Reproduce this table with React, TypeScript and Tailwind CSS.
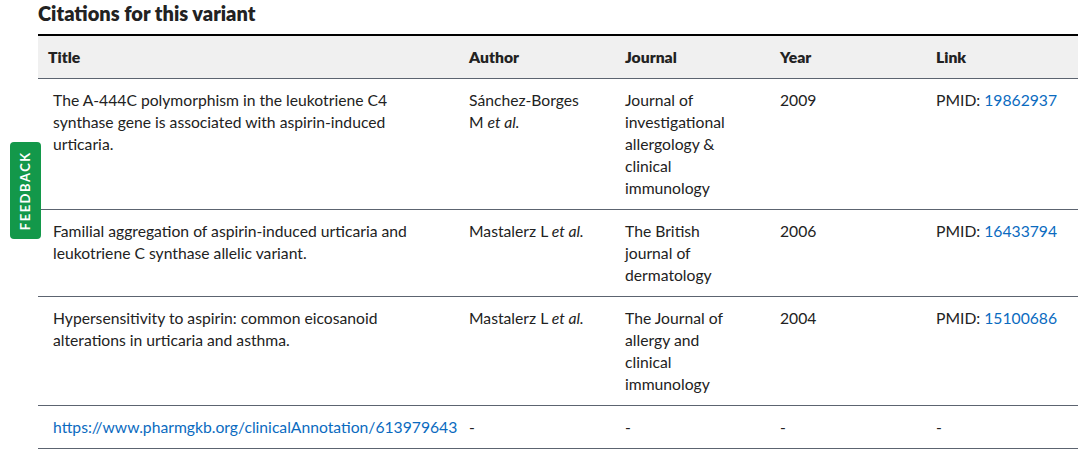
import React from "react";

type Citation = {
  title: React.ReactNode;
  author: string;
  journal: React.ReactNode;
  year: string;
  pmid: string;
};

const citations: Citation[] = [
  {
    title: (
      <>
        The A-444C polymorphism in the leukotriene C4
        <br />
        synthase gene is associated with aspirin-induced
        <br />
        urticaria.
      </>
    ),
    author: "Sánchez-Borges M",
    journal: (
      <>
        Journal of
        <br />
        investigational
        <br />
        allergology &amp;
        <br />
        clinical
        <br />
        immunology
      </>
    ),
    year: "2009",
    pmid: "19862937",
  },
  {
    title: (
      <>
        Familial aggregation of aspirin-induced urticaria and
        <br />
        leukotriene C synthase allelic variant.
      </>
    ),
    author: "Mastalerz L",
    journal: (
      <>
        The British
        <br />
        journal of
        <br />
        dermatology
      </>
    ),
    year: "2006",
    pmid: "16433794",
  },
  {
    title: (
      <>
        Hypersensitivity to aspirin: common eicosanoid
        <br />
        alterations in urticaria and asthma.
      </>
    ),
    author: "Mastalerz L",
    journal: (
      <>
        The Journal of
        <br />
        allergy and
        <br />
        clinical
        <br />
        immunology
      </>
    ),
    year: "2004",
    pmid: "15100686",
  },
];

function AuthorCell({ name }: { name: string }) {
  if (name.startsWith("Sánchez")) {
    return (
      <>
        Sánchez-Borges
        <br />M <i>et al.</i>
      </>
    );
  }
  return (
    <>
      {name} <i>et al.</i>
    </>
  );
}

export default function App() {
  return (
    <div
      className="relative h-[460px] w-[1091px] overflow-hidden bg-white pl-[38px] text-[#222]"
      style={{ fontFamily: "Lato, 'Liberation Sans', sans-serif" }}
    >
      <h2 className="pt-[1px] text-[20px] font-extrabold leading-[24px] text-[#222]">Citations for this variant</h2>

      <table className="mt-[9px] w-[1040px] table-fixed border-collapse text-[15.7px] leading-[22px]">
        <colgroup>
          <col className="w-[421px]" />
          <col className="w-[156px]" />
          <col className="w-[155px]" />
          <col className="w-[156px]" />
          <col className="w-[152px]" />
        </colgroup>
        <thead>
          <tr className="border-t-2 border-b border-t-black border-b-[#5c6470] bg-[#f0f0f0]">
            {["Title", "Author", "Journal", "Year", "Link"].map((h) => (
              <th key={h} className="px-[10px] py-[10px] text-left font-extrabold">
                {h}
              </th>
            ))}
          </tr>
        </thead>
        <tbody>
          {citations.map((c) => (
            <tr key={c.pmid} className="border-b border-[#5c6470] align-top">
              <td className="whitespace-nowrap py-[10px] pl-[15px] pr-[10px]">{c.title}</td>
              <td className="whitespace-nowrap px-[10px] py-[10px]">
                <AuthorCell name={c.author} />
              </td>
              <td className="whitespace-nowrap px-[10px] py-[10px]">{c.journal}</td>
              <td className="px-[10px] py-[10px]">{c.year}</td>
              <td className="whitespace-nowrap px-[10px] py-[10px]">
                PMID: <a className="text-[#0b6bbf]">{c.pmid}</a>
              </td>
            </tr>
          ))}
          <tr className="border-b border-[#5c6470] align-top">
            <td className="overflow-visible whitespace-nowrap py-[10px] pl-[15px] pr-[10px]">
              <a className="text-[#0b6bbf]">https://www.pharmgkb.org/clinicalAnnotation/613979643</a>
            </td>
            <td className="px-[10px] py-[10px]">-</td>
            <td className="px-[10px] py-[10px]">-</td>
            <td className="px-[10px] py-[10px]">-</td>
            <td className="px-[10px] py-[10px]">-</td>
          </tr>
        </tbody>
      </table>

      <button className="absolute left-[10px] top-[142px] flex h-[97px] w-[31px] items-center justify-center rounded-[4px] bg-[#13984a]">
        <span className="-rotate-90 whitespace-nowrap text-[13px] font-bold tracking-[1.5px] text-white">
          FEEDBACK
        </span>
      </button>
    </div>
  );
}
